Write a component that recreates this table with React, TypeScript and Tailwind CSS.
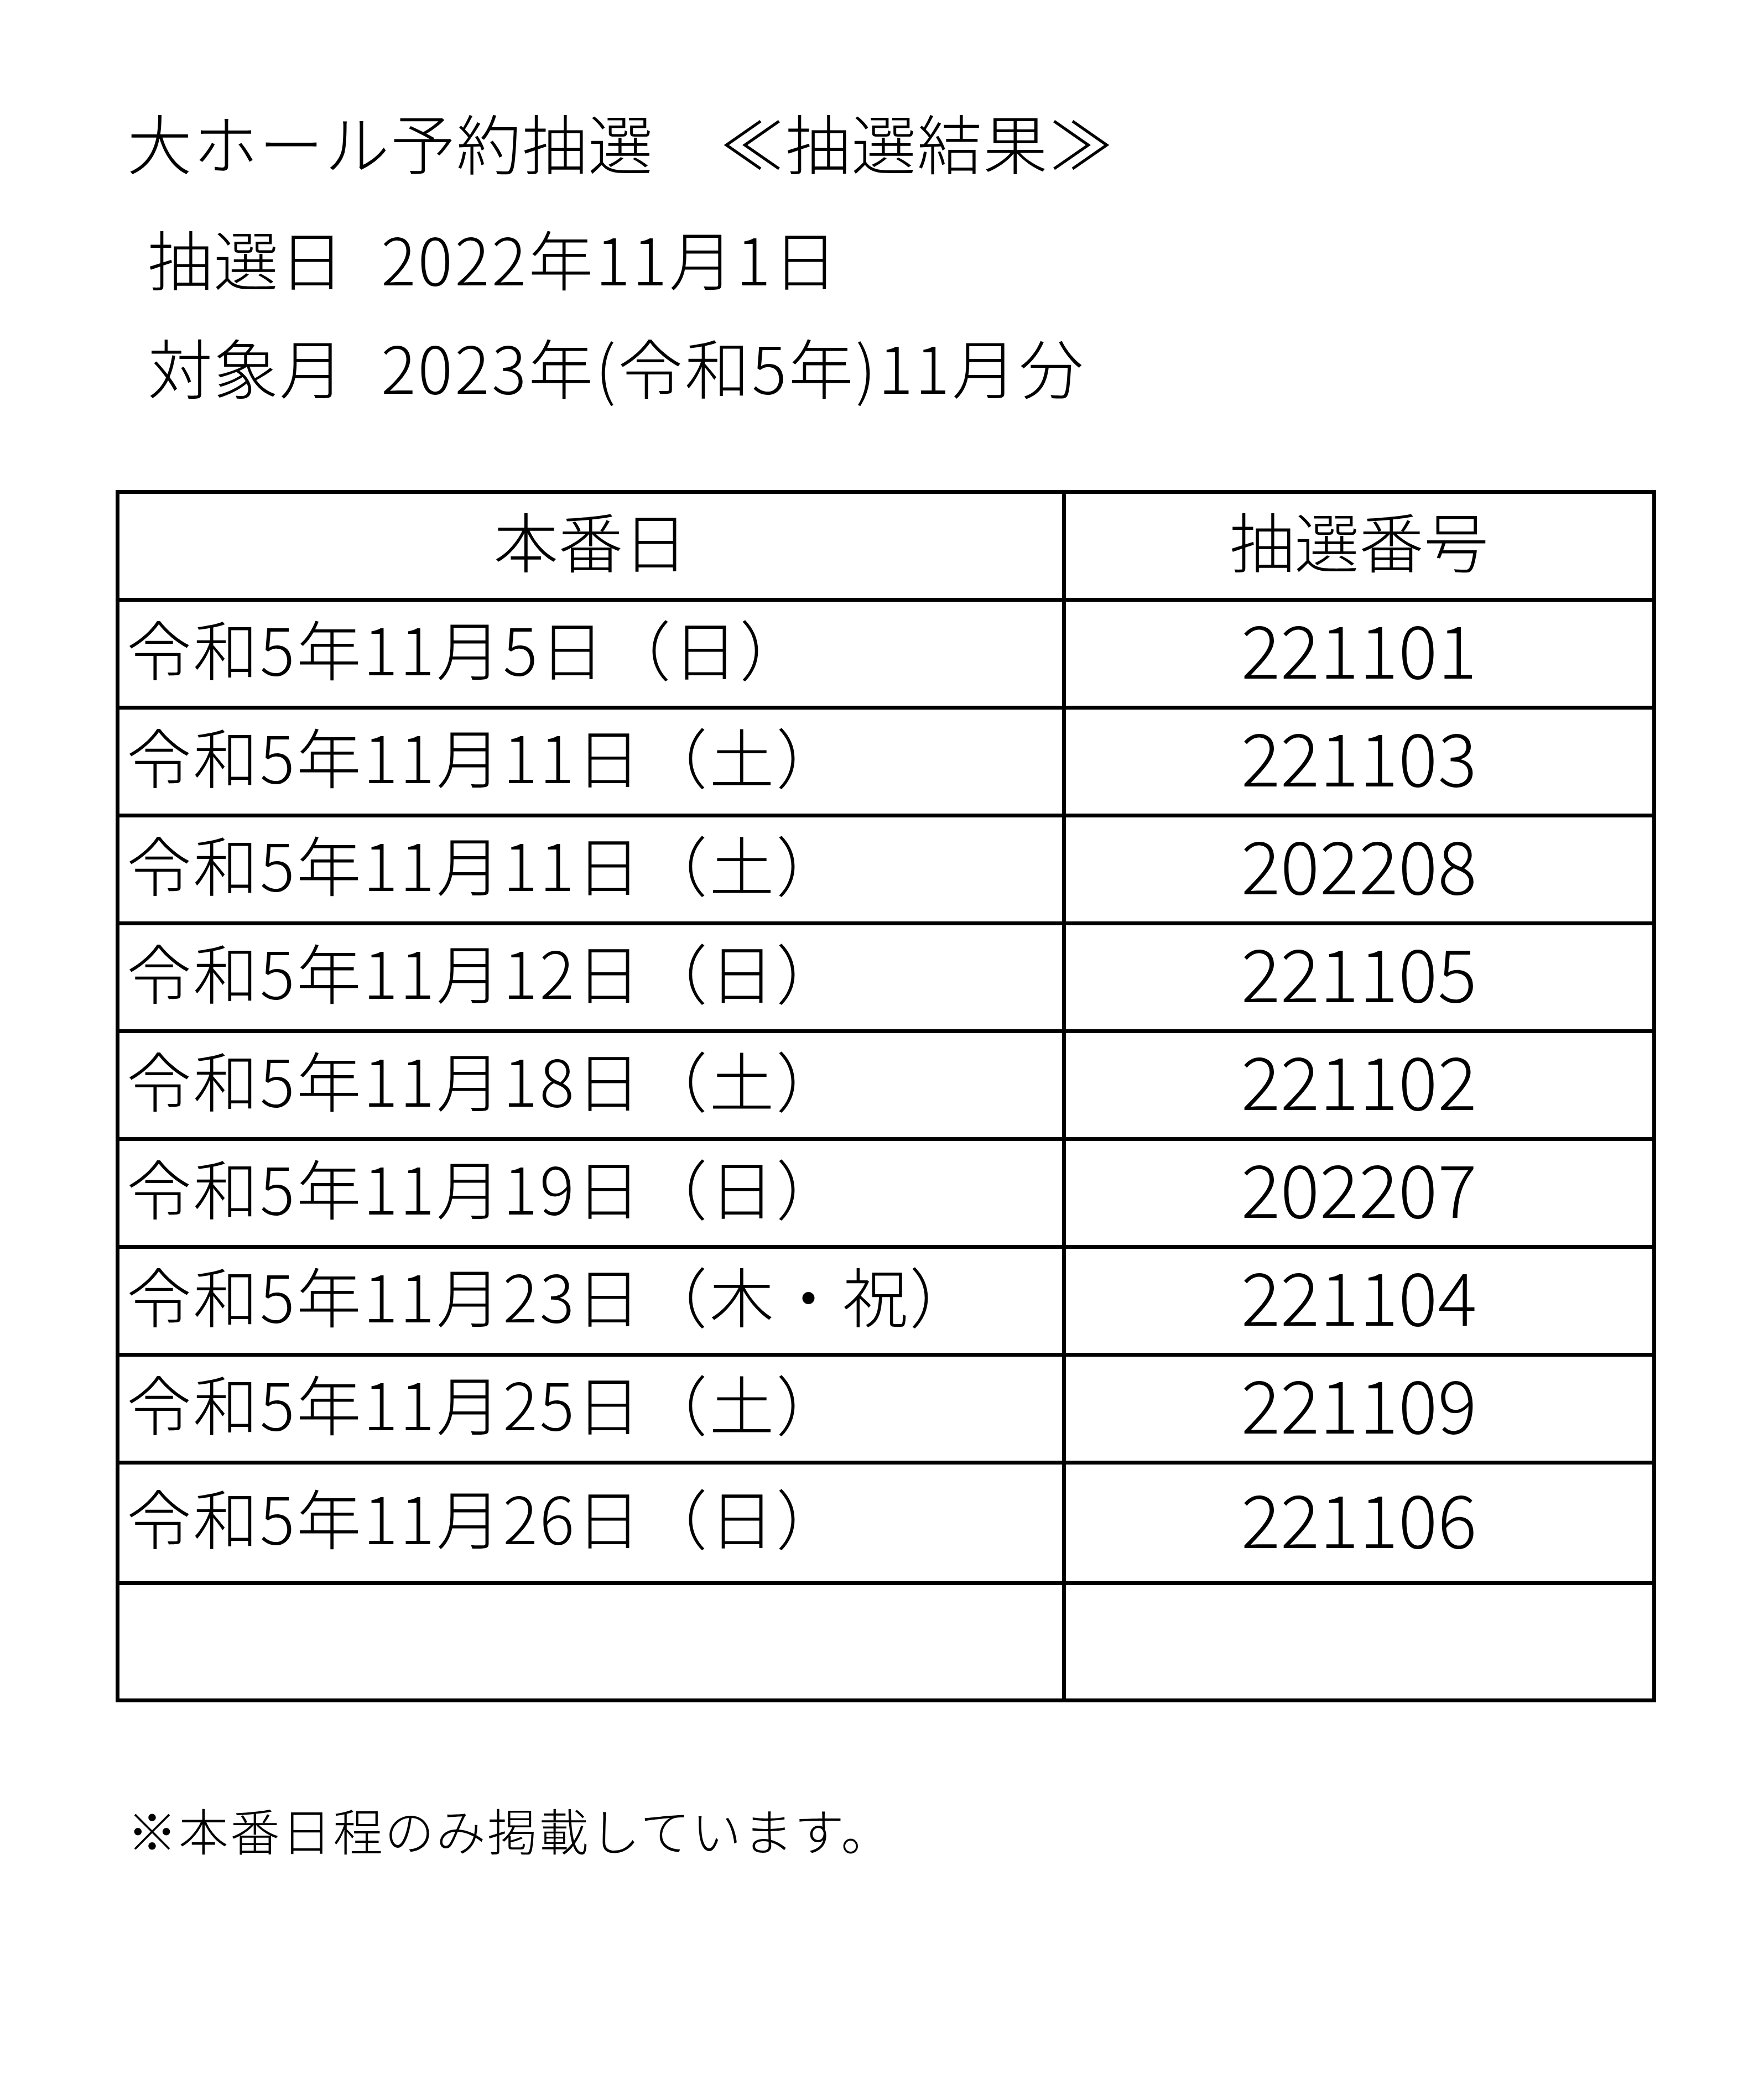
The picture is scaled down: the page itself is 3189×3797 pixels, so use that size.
const results = [
  { date: "令和5年11月5日（日）", no: "221101" },
  { date: "令和5年11月11日（土）", no: "221103" },
  { date: "令和5年11月11日（土）", no: "202208" },
  { date: "令和5年11月12日（日）", no: "221105" },
  { date: "令和5年11月18日（土）", no: "221102" },
  { date: "令和5年11月19日（日）", no: "202207" },
  { date: "令和5年11月23日（木・祝）", no: "221104" },
  { date: "令和5年11月25日（土）", no: "221109" },
]

function Row({ date, no, h, last }: { date: string; no: string; h: string; last?: boolean }) {
  return (
    <div className={`flex ${h} ${last ? "" : "border-b-[7px] border-black"}`}>
      <div className="flex w-[1711px] items-center border-r-[7px] border-black pb-[24px] pl-[13px] text-[117px] leading-none tracking-[3.5px]">
        {date}
      </div>
      <div className="flex flex-1 items-center justify-center pb-[24px] text-[132px] leading-none tracking-[0.5px]">
        {no}
      </div>
    </div>
  )
}

export default function App() {
  return (
    <div
      className="h-[3797px] w-[3189px] bg-white font-light text-black"
      style={{ fontFamily: '"Noto Sans CJK JP", "Noto Sans", sans-serif' }}
    >
      <div className="pt-[197px]">
        <div className="pl-[230px] text-[117px] leading-[117px] tracking-[2px]">大ホール予約抽選　≪抽選結果≫</div>
        <div className="mt-[93px] flex pl-[267px] text-[117px] leading-[117px]">
          <span className="w-[422px] tracking-[2px]">抽選日</span>
          <span className="tracking-[4px]">2022年11月1日</span>
        </div>
        <div className="mt-[79px] flex pl-[267px] text-[117px] leading-[117px]">
          <span className="w-[422px] tracking-[2px]">対象月</span>
          <span className="tracking-[4px]">2023年(令和5年)11月分</span>
        </div>
      </div>

      <div className="ml-[209px] mt-[166px] w-[2785px] border-[7px] border-black">
        <div className="flex h-[195px] border-b-[7px] border-black">
          <div className="flex w-[1711px] items-center justify-center border-r-[7px] border-black pb-[24px] text-[117px] leading-none">
            本番日
          </div>
          <div className="flex flex-1 items-center justify-center pb-[24px] text-[117px] leading-none">
            抽選番号
          </div>
        </div>
        {results.map((r, i) => (
          <Row key={i} date={r.date} no={r.no} h="h-[195px]" />
        ))}
        <Row date="令和5年11月26日（日）" no="221106" h="h-[218px]" />
        <Row date="" no="" h="h-[205px]" last />
      </div>

      <div className="mt-[184px] pl-[230px] text-[90px] leading-[90px] tracking-[3px]">※本番日程のみ掲載しています。</div>
    </div>
  )
}
